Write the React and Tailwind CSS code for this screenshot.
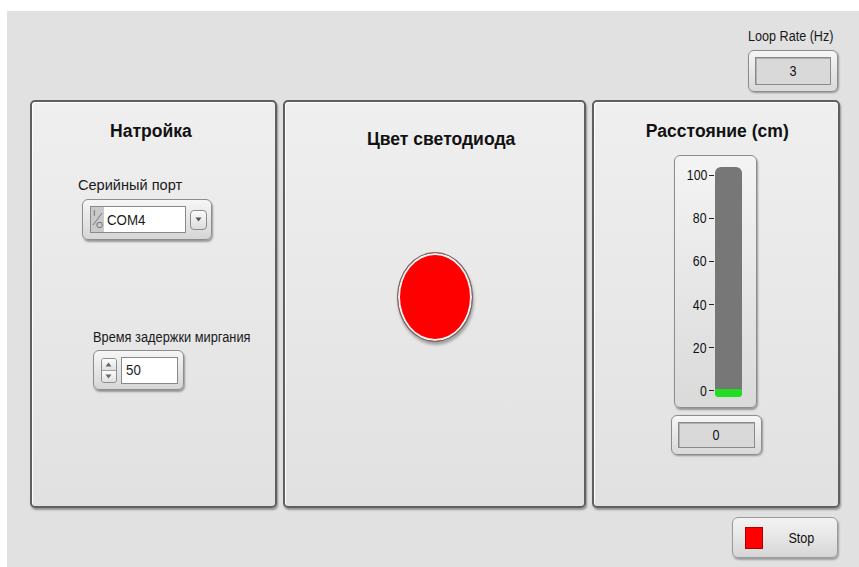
import React from "react";

const font = { fontFamily: '"Liberation Sans", Arial, sans-serif' };

function Label({ children, className = "" }) {
  return (
    <span className={`block origin-left whitespace-nowrap text-[14px] leading-[16px] text-[#1a1a1a] ${className}`}>
      {children}
    </span>
  );
}

function Title({ children, className = "" }) {
  return (
    <div className={`flex h-[20px] justify-center ${className}`}>
      <span className="block scale-x-[0.975] whitespace-nowrap text-[18px] font-bold leading-[20px] text-[#111]">
        {children}
      </span>
    </div>
  );
}

function Panel({ className = "", children }) {
  return (
    <div
      className={`relative h-full rounded-[5px] border-2 border-[#5f5f5f] bg-gradient-to-b from-[#efefef] to-[#e1e1e1] shadow-[1px_2px_2px_rgba(0,0,0,0.35),inset_1px_1px_0_#ffffff] ${className}`}
    >
      {children}
    </div>
  );
}

// silver-style numeric indicator with a grey readout
function Indicator({ value, className = "" }) {
  return (
    <div
      className={`flex items-center justify-center rounded-[6px] border border-[#8d8d8d] bg-gradient-to-b from-[#f6f6f6] to-[#d9d9d9] p-[6px] shadow-[1px_1px_2px_rgba(0,0,0,0.35)] ${className}`}
    >
      <div className="flex h-full w-full items-center justify-center border border-[#8a8a8a] bg-[#d9d9d9] shadow-[inset_1px_1px_0_#b0b0b0]">
        <span className="block scale-x-[0.9] text-[14px] leading-[16px] text-[#111]">{value}</span>
      </div>
    </div>
  );
}

function ComboBox() {
  return (
    <div className="flex h-[41px] w-[130px] items-center rounded-[6px] border border-[#8d8d8d] bg-gradient-to-b from-[#f6f6f6] to-[#d6d6d6] pl-[7px] pr-[4px] shadow-[1px_2px_2px_rgba(0,0,0,0.35)]">
      <div className="flex h-[27px] w-[97px] border border-[#8a8a8a] bg-white">
        <div className="relative w-[13px] overflow-hidden bg-[#cacaca] text-[9px] leading-[9px] text-[#6a6a6a]">
          <span className="absolute left-[2px] top-[2px]">I</span>
          <span className="absolute left-[5px] top-[14px]">O</span>
          <svg className="absolute inset-0" width="13" height="25" viewBox="0 0 13 25">
            <line x1="11" y1="6" x2="2" y2="18" stroke="#7a7a7a" strokeWidth="1" />
          </svg>
        </div>
        <div className="flex flex-1 items-center pl-[3px]">
          <Label className="scale-x-[0.95]">COM4</Label>
        </div>
      </div>
      <div className="ml-[4px] flex h-[20px] w-[17px] items-center justify-center rounded-[4px] border border-[#8d8d8d] bg-gradient-to-b from-[#fbfbfb] to-[#dcdcdc]">
        <svg width="7" height="5" viewBox="0 0 7 5">
          <path d="M0.5 0.5 L6.5 0.5 L3.5 4.5 Z" fill="#555" />
        </svg>
      </div>
    </div>
  );
}

function Spinner() {
  return (
    <div className="flex h-[40px] w-[91px] items-center rounded-[6px] border border-[#8d8d8d] bg-gradient-to-b from-[#f6f6f6] to-[#d6d6d6] pl-[7px] pr-[5px] shadow-[1px_2px_2px_rgba(0,0,0,0.35)]">
      <div className="flex h-[25px] w-[16px] flex-col overflow-hidden rounded-[3px] border border-[#8d8d8d]">
        <div className="flex flex-1 items-center justify-center border-b border-[#a0a0a0] bg-gradient-to-b from-[#fbfbfb] to-[#e0e0e0]">
          <svg width="7" height="5" viewBox="0 0 7 5">
            <path d="M0.5 4.5 L6.5 4.5 L3.5 0.5 Z" fill="#666" />
          </svg>
        </div>
        <div className="flex flex-1 items-center justify-center bg-gradient-to-b from-[#fbfbfb] to-[#e0e0e0]">
          <svg width="7" height="5" viewBox="0 0 7 5">
            <path d="M0.5 0.5 L6.5 0.5 L3.5 4.5 Z" fill="#666" />
          </svg>
        </div>
      </div>
      <div className="ml-[4px] flex h-[27px] w-[58px] items-center border border-[#8a8a8a] bg-white pl-[4px]">
        <Label className="scale-x-[0.95]">50</Label>
      </div>
    </div>
  );
}

function Tank() {
  const ticks = ["100", "80", "60", "40", "20", "0"];
  return (
    <div className="flex h-[253px] w-[83px] rounded-[6px] border border-[#8d8d8d] bg-gradient-to-b from-[#f4f4f4] to-[#dadada] pt-[12px] pb-[9px] shadow-[1px_2px_2px_rgba(0,0,0,0.35)]">
      <div className="flex w-[39px] flex-col justify-between">
        {ticks.map((t) => (
          <div key={t} className="flex h-[14px] items-center justify-end">
            <span className="block origin-right scale-x-[0.88] text-[14px] leading-[14px] text-[#111]">{t}</span>
            <span className="ml-[2px] h-[1px] w-[5px] bg-[#222]" />
          </div>
        ))}
      </div>
      <div className="ml-[1px] mt-[-1px] mb-[1px] flex w-[27px] flex-col justify-end overflow-hidden rounded-t-[6px] rounded-b-[4px] bg-[#777777]">
        <div className="h-[8px] bg-[#22dd22]" />
      </div>
    </div>
  );
}

export default function App() {
  return (
    <div className="h-[567px] w-[859px] bg-white pl-[7px] pt-[11px]" style={font}>
      <div className="flex h-full flex-col bg-[#e1e1e1] pl-[23px] pr-[19px]">
        {/* top bar: loop rate readout */}
        <div className="flex h-[89px] justify-end pr-[2px] pt-[17px]">
          <div className="flex w-[90px] flex-col">
            <Label className="mb-[6px] scale-x-[0.9]">Loop Rate (Hz)</Label>
            <Indicator value="3" className="h-[42px] w-[90px]" />
          </div>
        </div>

        {/* three front-panel groups */}
        <div className="flex h-[408px] gap-[6px]">
          <div className="w-[247px]">
            <Panel className="flex flex-col pt-[19px]">
              <Title className="mr-[5px]">Натройка</Title>
              <div className="ml-[46px] mt-[36px] flex">
                <Label className="scale-x-[1.04]">Серийный порт</Label>
              </div>
              <div className="ml-[50px] mt-[6px] flex">
                <ComboBox />
              </div>
              <div className="ml-[61px] mt-[89px] flex">
                <Label className="scale-x-[0.915]">Время задержки миргания</Label>
              </div>
              <div className="ml-[61px] mt-[5px] flex">
                <Spinner />
              </div>
            </Panel>
          </div>

          <div className="w-[303px]">
            <Panel className="flex flex-col items-center pt-[27px]">
              <Title className="ml-[14px]">Цвет светодиода</Title>
              <div className="mt-[103px] h-[90px] w-[76px] rounded-[50%] border-[1.5px] border-[#6b6b6b] bg-[#ff0000] shadow-[inset_0_0_0_2px_#f4f4f4,1px_3px_3px_rgba(0,0,0,0.3)]" />
            </Panel>
          </div>

          <div className="w-[248px]">
            <Panel className="flex flex-col items-center pt-[19px]">
              <Title className="ml-[2px]">Расстояние (cm)</Title>
              <div className="mt-[14px] -ml-[1px] flex">
                <Tank />
              </div>
              <Indicator value="0" className="mt-[7px] h-[40px] w-[91px]" />
            </Panel>
          </div>
        </div>

        {/* stop button */}
        <div className="flex justify-end pr-[2px] pt-[9px]">
          <button className="flex h-[41px] w-[106px] items-center rounded-[6px] border border-[#9a9a9a] bg-gradient-to-b from-[#f3f3f3] via-[#e6e6e6] to-[#d6d6d6] pl-[12px] shadow-[1px_2px_2px_rgba(0,0,0,0.3)]">
            <span className="h-[22px] w-[18px] border border-[#b00000] bg-[#ff0000]" />
            <span className="ml-[24px] block scale-x-[0.9] text-[14px] leading-[16px] text-[#111]">Stop</span>
          </button>
        </div>
      </div>
    </div>
  );
}
